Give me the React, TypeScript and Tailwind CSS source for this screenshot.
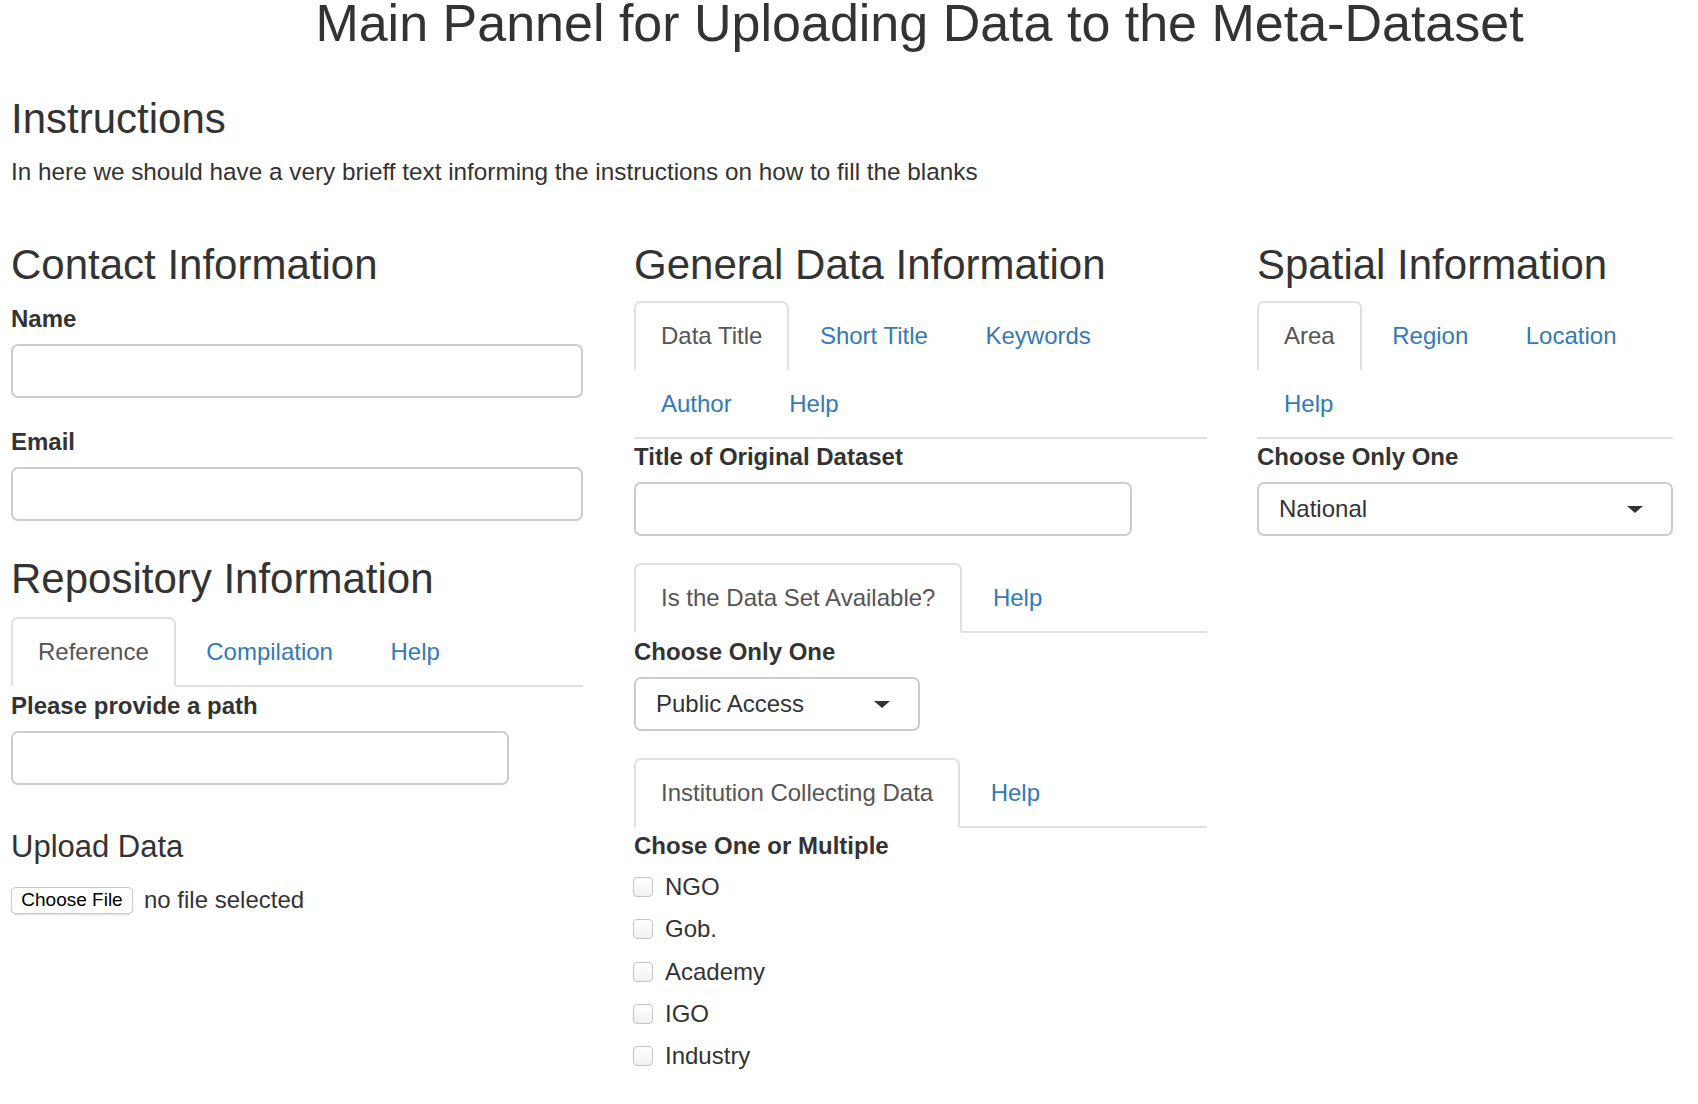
import * as React from "react";

type Tab = { label: string; active?: boolean };

function Tabs({ tabs, className = "" }: { tabs: Tab[]; className?: string }) {
  return (
    <ul className={`flex flex-wrap border-b-2 border-[#e0e0e0] ${className}`}>
      {tabs.map((t) => (
        <li key={t.label} className="-mb-[2px] mr-[3.5px]">
          <span
            className={
              t.active
                ? "block rounded-t-[7px] border-2 border-[#e0e0e0] border-b-transparent bg-white px-[25px] py-[16px] leading-[34px] text-[#555]"
                : "block rounded-t-[7px] border-2 border-transparent px-[25px] py-[16px] leading-[34px] text-[#337ab7]"
            }
          >
            {t.label}
          </span>
        </li>
      ))}
    </ul>
  );
}

function Label({ children, className = "" }: { children: React.ReactNode; className?: string }) {
  return <label className={`block text-[24px] font-bold leading-[34px] ${className}`}>{children}</label>;
}

function TextInput({ className = "" }: { className?: string }) {
  return <div className={`h-[54px] rounded-[7px] border-2 border-[#cccccc] bg-white ${className}`} />;
}

function Select({ value, className = "" }: { value: string; className?: string }) {
  return (
    <div
      className={`flex h-[54px] items-center justify-between rounded-[7px] border-2 border-[#cccccc] bg-white pl-[20px] pr-[28px] ${className}`}
    >
      <span className="text-[24px] leading-[34px] text-[#333]">{value}</span>
      <span className="h-0 w-0 border-l-[8px] border-r-[8px] border-t-[7px] border-l-transparent border-r-transparent border-t-[#333]" />
    </div>
  );
}

const INSTITUTIONS = ["NGO", "Gob.", "Academy", "IGO", "Industry"];

export default function App() {
  return (
    <div className="min-h-screen bg-white font-['Liberation_Sans',Arial,sans-serif] text-[24px] text-[#333]">
      <h1 className="pl-[141px] text-center text-[52px] leading-[46px]">
        Main Pannel for Uploading Data to the Meta-Dataset
      </h1>

      <div className="pl-[11px]">
        <h3 className="mt-[50px] text-[42px] leading-[46px]">Instructions</h3>
        <p className="mt-[13px] text-[24.3px] leading-[34px]">
          In here we should have a very brieff text informing the instructions on how to fill the blanks
        </p>

        <div className="mt-[53px] flex items-start">
          {/* left column */}
          <div className="w-[572px]">
            <h3 className="text-[42px] leading-[46px]">Contact Information</h3>
            <Label className="mt-[14px]">Name</Label>
            <TextInput className="mt-[8px] w-full" />
            <Label className="mt-[27px]">Email</Label>
            <TextInput className="mt-[8px] w-full" />

            <h3 className="mt-[35px] text-[42px] leading-[46px]">Repository Information</h3>
            <Tabs
              className="mt-[15px]"
              tabs={[{ label: "Reference", active: true }, { label: "Compilation" }, { label: "Help" }]}
            />
            <Label className="mt-[2px]">Please provide a path</Label>
            <TextInput className="mt-[8px] w-[498px]" />

            <h4 className="mt-[45px] text-[31px] leading-[34px]">Upload Data</h4>
            <div className="mt-[19px] flex items-center">
              <button
                type="button"
                className="flex h-[27px] w-[122px] items-center justify-center rounded-[5px] border border-[#c8c8c8] bg-white text-[19px] text-black shadow-[0_1px_1px_rgba(0,0,0,0.12)]"
              >
                Choose File
              </button>
              <span className="ml-[11px] leading-[34px]">no file selected</span>
            </div>
          </div>

          {/* middle column */}
          <div className="ml-[51px] w-[573px]">
            <h3 className="text-[42px] leading-[46px]">General Data Information</h3>
            <Tabs
              className="mt-[13px]"
              tabs={[
                { label: "Data Title", active: true },
                { label: "Short Title" },
                { label: "Keywords" },
                { label: "Author" },
                { label: "Help" },
              ]}
            />
            <Label className="mt-[1px]">Title of Original Dataset</Label>
            <TextInput className="mt-[8px] w-[498px]" />

            <Tabs
              className="mt-[27px]"
              tabs={[{ label: "Is the Data Set Available?", active: true }, { label: "Help" }]}
            />
            <Label className="mt-[2px]">Choose Only One</Label>
            <Select value="Public Access" className="mt-[8px] w-[286px]" />

            <Tabs
              className="mt-[27px]"
              tabs={[{ label: "Institution Collecting Data", active: true }, { label: "Help" }]}
            />
            <Label className="mt-[1px]">Chose One or Multiple</Label>
            <div className="mt-[3px]">
              {INSTITUTIONS.map((name) => (
                <div key={name} className="flex h-[42.25px] items-center">
                  <span className="-ml-px h-[20px] w-[20px] rounded-[4px] border border-[#c4c4c4] bg-linear-to-b from-white to-[#f1f1f1]" />
                  <span className="ml-[12px] leading-[34px]">{name}</span>
                </div>
              ))}
            </div>
          </div>

          {/* right column */}
          <div className="ml-[50px] w-[416px]">
            <h3 className="text-[42px] leading-[46px]">Spatial Information</h3>
            <Tabs
              className="mt-[13px]"
              tabs={[{ label: "Area", active: true }, { label: "Region" }, { label: "Location" }, { label: "Help" }]}
            />
            <Label className="mt-[1px]">Choose Only One</Label>
            <Select value="National" className="mt-[8px] w-full" />
          </div>
        </div>
      </div>
    </div>
  );
}
